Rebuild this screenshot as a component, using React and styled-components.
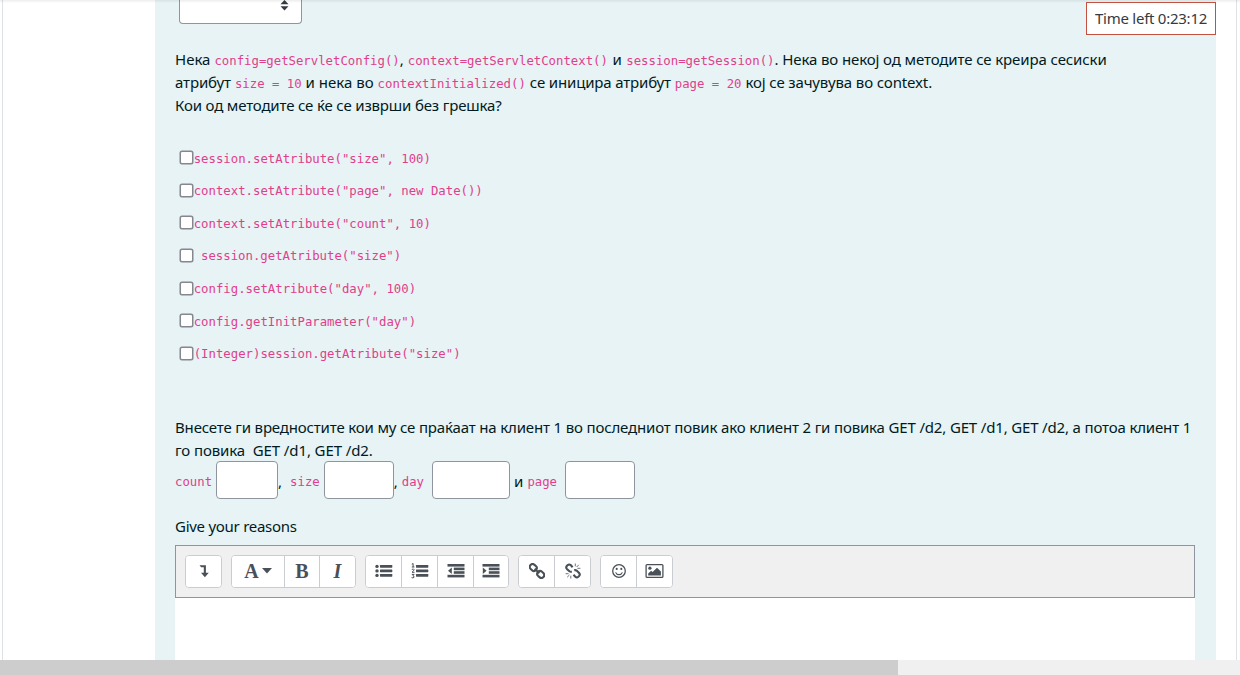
import React from 'react';
import styled, { createGlobalStyle } from 'styled-components';

const Global = createGlobalStyle`
  * { box-sizing: border-box; }
  html, body { margin: 0; padding: 0; background: #fff; overflow: hidden; }
`;

const Page = styled.div`
  position: relative;
  width: 1240px;
  height: 675px;
  overflow: hidden;
  display: flex;
  flex-direction: column;
  background: #fff;
  color: #001a1e;
  font-family: 'Noto Sans', 'Open Sans', sans-serif;
  font-size: 15px;
`;

const TopShade = styled.div`
  position: absolute;
  inset: 0 0 auto 0;
  height: 3px;
  background: linear-gradient(rgba(0, 0, 0, 0.07), rgba(0, 0, 0, 0));
`;

const Main = styled.main`
  height: 660px;
  margin: 0 3px 0 2px;
  border: solid #dee2e6;
  border-width: 0 1px;
  padding: 0 20px 0 152px;
  overflow: hidden;
`;

const Question = styled.section`
  height: 660px;
  padding: 0 21px 0 20px;
  background: #e7f3f5;
  overflow: hidden;
`;

const Select = styled.div`
  width: 123px;
  height: 24px;
  margin-left: 4px;
  padding: 0 12.5px 0 0;
  display: flex;
  justify-content: flex-end;
  background: #fff;
  border: 1px solid #8f959e;
  border-top: 0;
  border-radius: 0 0 4px 4px;
`;

const Timer = styled.div`
  position: absolute;
  left: 1086px;
  top: 2px;
  width: 130px;
  height: 33px;
  padding-bottom: 2px;
  display: flex;
  align-items: center;
  justify-content: center;
  border: 1px solid #c4503f;
  background: #fff;
  color: #343a40;
  letter-spacing: -0.25px;
  white-space: nowrap;
`;

const Paragraph = styled.div`
  margin-top: ${(p) => p.$top}px;
`;

const Line = styled.div`
  height: 23.3px;
  line-height: 23.3px;
  display: flex;
  align-items: baseline;
  white-space: pre;
`;

const Words = styled.span`
  letter-spacing: ${(p) => p.$ls || 0}px;
  margin: 0 ${(p) => p.$after || 0}px 0 ${(p) => p.$before || 0}px;
`;

const Code = styled.code`
  font-family: 'DejaVu Sans Mono', 'Liberation Mono', monospace;
  font-size: 12.32px;
  color: #e0408b;
  white-space: pre;
`;

const Options = styled.div`
  margin-top: 25px;
  padding-left: 5px;
`;

const Option = styled.label`
  height: 32.6px;
  display: flex;
  align-items: center;
`;

const Check = styled.span`
  width: 13px;
  height: 13px;
  margin: 0 ${(p) => (p.$wide ? 8 : 0.7)}px 2px 0;
  border: 1px solid #84878f;
  box-shadow: 0 0 0 0.5px #84878f;
  border-radius: 2px;
  background: #fff;
`;

const Answers = styled.div`
  display: flex;
  align-items: center;
  height: 38px;
  white-space: pre;

  & > code { padding-top: 4px; }
  & > span { padding-top: 2px; }
`;

const Field = styled.input`
  width: ${(p) => p.$w}px;
  height: 38px;
  margin: 0 ${(p) => p.$after || 0}px 0 ${(p) => p.$before}px;
  border: 1px solid #8f959e;
  border-radius: 4px;
  background: #fff;
`;

const Toolbar = styled.div`
  height: 53px;
  margin-top: 7px;
  padding: 9px;
  display: flex;
  gap: 9px;
  border: 1px solid #8f959e;
  background: #f0f0f0;
`;

const Group = styled.div`
  height: 33px;
  display: flex;
  border: 1px solid #c9cdd1;
  border-radius: 4px;
  background: #fff;
  overflow: hidden;
`;

const Tool = styled.button`
  width: ${(p) => p.$w}px;
  padding: 0;
  display: flex;
  align-items: center;
  justify-content: center;
  gap: 3px;
  border: 0;
  background: #fff;
  color: #495057;
  & + & { border-left: 1px solid #c9cdd1; }
`;

const Editor = styled.div`
  height: 80px;
  background: #fff;
`;

const ScrollTrack = styled.div`
  height: 15px;
  background: #f0f0f0;
`;

const ScrollThumb = styled.div`
  width: 898px;
  height: 15px;
  background: #cdcdcd;
`;

const Glyph = styled.span`
  font: ${(p) => (p.$italic ? 'italic ' : '')}bold 20px 'Liberation Serif', serif;
  line-height: 20px;
`;

const Svg = ({ w = 18, h = 16, children }) => (
  <svg width={w} height={h} viewBox={`0 0 ${w} ${h}`} fill="currentColor">{children}</svg>
);

const Down = () => (
  <Svg w={12} h={14}><path d="M1.5 1.2H7.9V8.8H10.8L6.9 13.2L3 8.8H5.8V3.2H3.1Z" /></Svg>
);
const Bullets = () => (
  <Svg>
    {[2.5, 7, 11.5].map((y) => <circle key={y} cx="2" cy={y + 0.9} r="1.7" />)}
    {[2, 6.5, 11].map((y) => <rect key={y} x="5" y={y + 0.1} width="12.3" height="2.6" rx="0.4" />)}
  </Svg>
);
const Numbers = () => (
  <Svg>
    {[2, 6.5, 11].map((y) => <rect key={y} x="5" y={y + 0.1} width="12.3" height="2.6" rx="0.4" />)}
    <g fill="none" stroke="currentColor" strokeWidth="1">
      <path d="M.8 1.2L2.1 .5V4M.8 4H3.4" />
      <path d="M.8 6.5Q2.8 5.3 3.1 6.7Q3 7.7 1 9.3H3.5" />
      <path d="M.8 11.4H3.1L1.9 12.8Q3.6 13.1 3 14.3Q2.2 15.4 .6 14.6" />
    </g>
  </Svg>
);
const Indentation = ({ out }) => (
  <Svg>
    <rect x="0.5" y="1" width="17" height="2.6" />
    <rect x="6.8" y="4.6" width="10.7" height="2.6" />
    <rect x="6.8" y="8.2" width="10.7" height="2.6" />
    <rect x="0.5" y="11.8" width="17" height="2.6" />
    <path d={out ? 'M4.8 4.4V11L1 7.7Z' : 'M.8 4.4V11L4.6 7.7Z'} />
  </Svg>
);
const Link = () => (
  <Svg w={16} h={16}>
    <g fill="none" stroke="currentColor" strokeWidth="2.1" transform="rotate(43 8 8)">
      <rect x="-0.8" y="5.2" width="7.4" height="5.6" rx="2.8" />
      <rect x="9.4" y="5.2" width="7.4" height="5.6" rx="2.8" />
      <path d="M4.8 8H11.2" />
    </g>
  </Svg>
);
const Unlink = () => (
  <Svg w={16} h={16}>
    <g fill="none" stroke="currentColor" strokeWidth="2.1">
      <path d="M7.6 4.2L5.7 2.1Q4.2 .9 2.7 2.1L1.8 3Q.6 4.5 1.9 5.9L4.4 8.3Q5.4 9.1 6.8 8.6" />
      <path d="M8.5 11.8L10.3 13.8Q11.8 15.1 13.3 13.8L14.2 12.9Q15.4 11.4 14.1 10L11.6 7.6Q10.6 6.8 9.2 7.3" />
      <path d="M10.3.5V3.3M11.6 4L13.8 1.8M12.4 5.3H15.4M.6 10.7H3.6M4.4 12L2.2 14.2M5.8 12.7V15.5" strokeWidth=".8" />
    </g>
  </Svg>
);
const Smile = () => (
  <Svg w={16} h={16}>
    <circle cx="8" cy="8" r="6.3" fill="none" stroke="currentColor" strokeWidth="1.3" />
    <circle cx="5.7" cy="5.9" r="1.05" /><circle cx="10.3" cy="5.9" r="1.05" />
    <path d="M4.6 9.4Q5.5 11.7 8 11.7Q10.5 11.7 11.4 9.4" fill="none" stroke="currentColor" strokeWidth="1.2" />
  </Svg>
);
const Picture = () => (
  <Svg w={19} h={16}>
    <rect x="1.1" y="1.6" width="16.8" height="12.8" rx="1" fill="none" stroke="currentColor" strokeWidth="1.3" />
    <circle cx="4.9" cy="5.2" r="1.6" />
    <path d="M3.2 12.4V10.5L6.1 7.7L7.6 9.1L12 4.7L15.9 8.5V12.4Z" />
  </Svg>
);

const OPTIONS = [
  'session.setAtribute("size", 100)',
  'context.setAtribute("page", new Date())',
  'context.setAtribute("count", 10)',
  'session.getAtribute("size")',
  'config.setAtribute("day", 100)',
  'config.getInitParameter("day")',
  '(Integer)session.getAtribute("size")',
];

export default function App() {
  return (
    <Page>
      <Global />
      <Main>
        <Question>
          <Select>
            <svg width="9" height="12" viewBox="0 0 9 12" fill="#343a40"><path d="M.5 4.3L4.5 0L8.5 4.3ZM.5 6.2H8.5L4.5 10.5Z" /></svg>
          </Select>
          <Paragraph $top={23.5}>
            <Line>
              <Words $after={4}>Нека</Words><Code>config=getServletConfig()</Code>
              <Words $after={4}>,</Words><Code>context=getServletContext()</Code>
              <Words $before={4.5} $after={4.5}>и</Words><Code>session=getSession()</Code>
              <Words $ls={-0.11}>. Нека во некој од методите се креира сесиски</Words>
            </Line>
            <Line>
              <Words $ls={-0.12} $after={4}>атрибут</Words><Code>size = 10</Code>
              <Words $before={4} $after={4}>и нека во</Words><Code>contextInitialized()</Code>
              <Words $ls={-0.16} $before={4} $after={4}>се иницира атрибут</Words><Code>page = 20</Code>
              <Words $ls={-0.14} $before={4}>кој се зачувува во context.</Words>
            </Line>
            <Line><Words $ls={-0.16}>Кои од методите се ќе се изврши без грешка?</Words></Line>
          </Paragraph>
          <Options>
            {OPTIONS.map((text, i) => (
              <Option key={text}><Check $wide={i === 3} /><Code>{text}</Code></Option>
            ))}
          </Options>
          <Paragraph $top={45}>
            <Line><Words $ls={-0.16}>Внесете ги вредностите кои му се праќаат на клиент 1 во последниот повик ако клиент 2 ги повика GET /d2, GET /d1, GET /d2, а потоа клиент 1</Words></Line>
            <Line><Words $ls={-0.1}>го повика  GET /d1, GET /d2.</Words></Line>
          </Paragraph>
          <Paragraph $top={-1}>
            <Answers>
              <Code>count</Code><Field $w={62} $before={4} /><Words $after={8}>,</Words>
              <Code>size</Code><Field $w={70} $before={4} /><Words $after={4}>,</Words>
              <Code>day</Code><Field $w={78} $before={8} $after={4} /><Words $after={4}>и</Words>
              <Code>page</Code><Field $w={70} $before={8} />
            </Answers>
          </Paragraph>
          <Paragraph $top={15.5}><Line><Words $ls={-0.27}>Give your reasons</Words></Line></Paragraph>
          <Toolbar>
            <Group><Tool $w={35}><Down /></Tool></Group>
            <Group>
              <Tool $w={52}><Glyph>A</Glyph><svg width="10" height="6" viewBox="0 0 10 6" fill="currentColor"><path d="M0 0H10L5 5.5Z" /></svg></Tool>
              <Tool $w={35}><Glyph>B</Glyph></Tool>
              <Tool $w={36}><Glyph $italic>I</Glyph></Tool>
            </Group>
            <Group>
              <Tool $w={35}><Bullets /></Tool><Tool $w={36}><Numbers /></Tool>
              <Tool $w={36}><Indentation out /></Tool><Tool $w={35}><Indentation /></Tool>
            </Group>
            <Group><Tool $w={35}><Link /></Tool><Tool $w={36}><Unlink /></Tool></Group>
            <Group><Tool $w={35}><Smile /></Tool><Tool $w={36}><Picture /></Tool></Group>
          </Toolbar>
          <Editor />
        </Question>
      </Main>
      <ScrollTrack><ScrollThumb /></ScrollTrack>
      <TopShade />
      <Timer>Time left 0:23:12</Timer>
    </Page>
  );
}
